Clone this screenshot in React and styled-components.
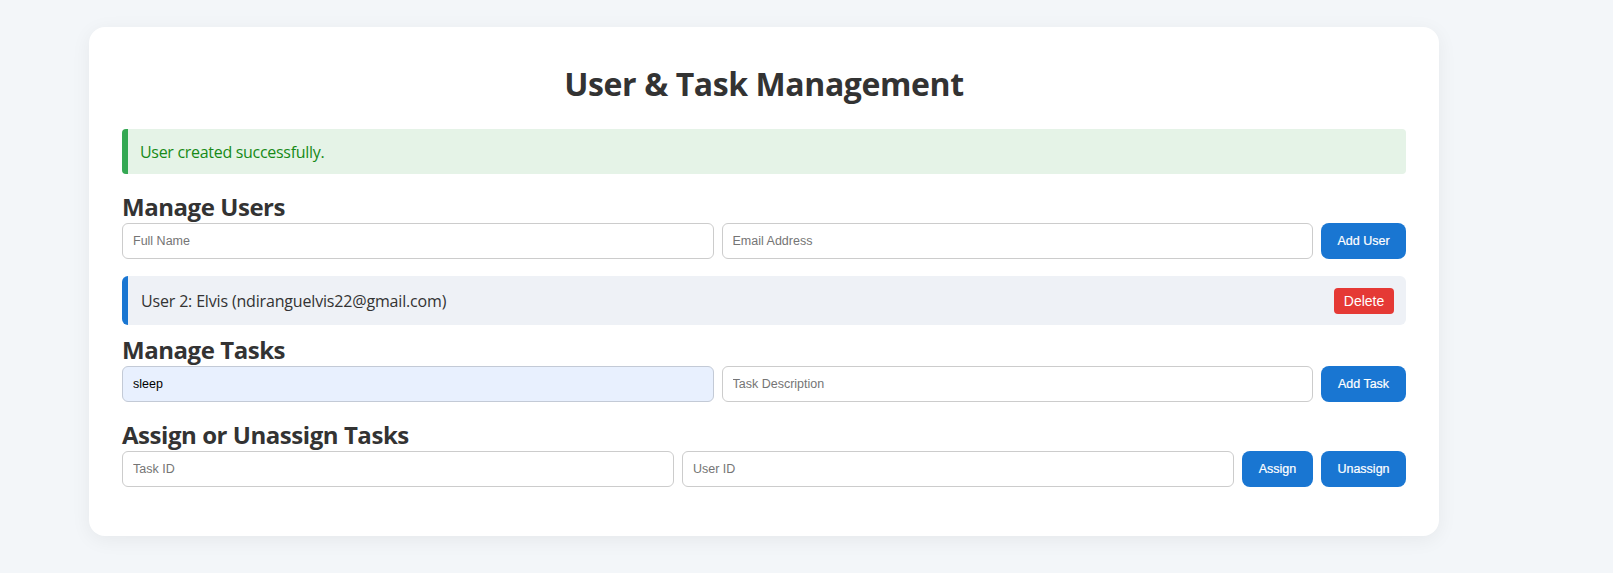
import React, { useState } from "react";
import styled, { createGlobalStyle } from "styled-components";

const GlobalStyle = createGlobalStyle`
  html, body {
    margin: 0;
    padding: 0;
    background: #f3f6f9;
  }
  body {
    font-family: "Open Sans", "Noto Sans", sans-serif;
    color: #333;
  }
`;

export default function App() {
  const [users] = useState([
    { id: 2, name: "Elvis", email: "ndiranguelvis22@gmail.com" },
  ]);

  return (
    <Page>
      <GlobalStyle />
      <Card>
        <Title>User &amp; Task Management</Title>
        <Alert>User created successfully.</Alert>

        <SectionTitle>Manage Users</SectionTitle>
        <Row>
          <Input placeholder="Full Name" />
          <Input placeholder="Email Address" />
          <Button>Add User</Button>
        </Row>
        <List>
          {users.map((u) => (
            <ListItem key={u.id}>
              <span>
                User {u.id}: {u.name} ({u.email})
              </span>
              <DeleteButton>Delete</DeleteButton>
            </ListItem>
          ))}
        </List>

        <SectionTitle>Manage Tasks</SectionTitle>
        <Row>
          <Input defaultValue="sleep" autofilled />
          <Input placeholder="Task Description" />
          <Button>Add Task</Button>
        </Row>

        <SectionTitle>Assign or Unassign Tasks</SectionTitle>
        <Row>
          <Input placeholder="Task ID" />
          <Input placeholder="User ID" />
          <Button narrow>Assign</Button>
          <Button>Unassign</Button>
        </Row>
      </Card>
    </Page>
  );
}

const Page = styled.div`
  min-height: 573px;
  padding: 27px 0 0 89px;
  box-sizing: border-box;
`;

const Card = styled.div`
  width: 1350px;
  box-sizing: border-box;
  background: #fff;
  border-radius: 16px;
  padding: 29px 33px 49px;
  box-shadow: 0 4px 20px rgba(0, 0, 0, 0.06);
`;

const Title = styled.h1`
  margin: 0 0 17px;
  text-align: center;
  font-size: 32px;
  line-height: 56px;
  font-weight: 700;
  letter-spacing: -0.4px;
  color: #333;
`;

const Alert = styled.div`
  height: 45px;
  display: flex;
  align-items: center;
  box-sizing: border-box;
  padding-left: 12px;
  background: #e5f3e7;
  border-left: 6px solid #34a853;
  border-radius: 4px;
  color: #178a17;
  font-size: 16px;
  letter-spacing: -0.3px;
`;

const SectionTitle = styled.h2`
  margin: 17px 0 0;
  font-size: 24px;
  line-height: 32px;
  font-weight: 700;
  letter-spacing: -0.45px;
  color: #333;
`;

const Row = styled.div`
  display: flex;
  gap: 8px;
  align-items: center;
`;

const Input = styled.input`
  flex: 1;
  min-width: 0;
  height: 36px;
  box-sizing: border-box;
  padding: 0 10px;
  border: 1px solid ${({ autofilled }) => (autofilled ? "#c3cad6" : "#ccc")};
  border-radius: 6px;
  background: ${({ autofilled }) => (autofilled ? "#e8f0fe" : "#fff")};
  font-family: "Liberation Sans", Arial, sans-serif;
  font-size: 12.5px;
  color: #000;
  outline: none;

  &::placeholder {
    color: #757575;
  }
`;

const Button = styled.button`
  flex: none;
  width: ${({ narrow }) => (narrow ? "71px" : "85px")};
  height: 36px;
  padding: 0;
  border: none;
  border-radius: 8px;
  background: #1976d2;
  color: #fff;
  font-family: "Liberation Sans", Arial, sans-serif;
  font-size: 12.5px;
  -webkit-text-stroke: 0.2px #fff;
  cursor: pointer;
`;

const List = styled.ul`
  list-style: none;
  margin: 17px 0 0;
  padding: 0;
`;

const ListItem = styled.li`
  display: flex;
  align-items: center;
  justify-content: space-between;
  height: 49px;
  box-sizing: border-box;
  padding: 0 12px 0 13px;
  background: #eef1f6;
  border-left: 6px solid #1976d2;
  border-radius: 6px;
  font-size: 16px;
  letter-spacing: -0.17px;
  color: #333;
  margin-bottom: -8px;
`;

const DeleteButton = styled.button`
  width: 60px;
  height: 26px;
  padding: 0;
  border: none;
  border-radius: 4px;
  background: #e53935;
  color: #fff;
  font-family: "Liberation Sans", Arial, sans-serif;
  font-size: 14px;
  letter-spacing: 0;
  cursor: pointer;
`;
